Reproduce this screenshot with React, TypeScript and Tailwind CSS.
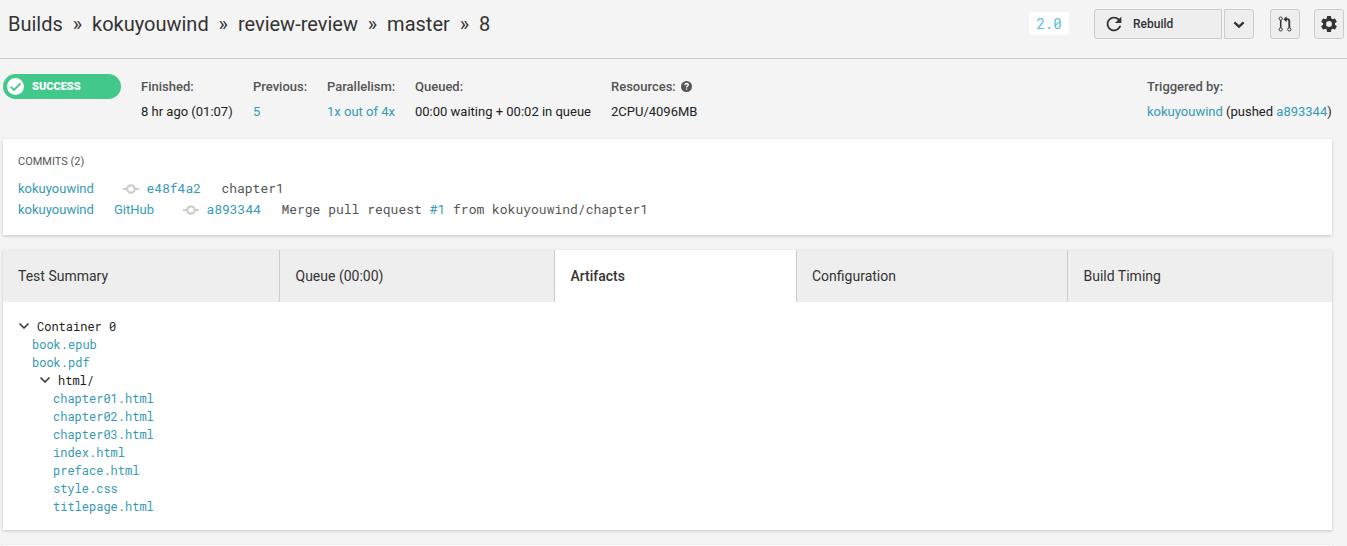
import React from "react";

const link = "text-[#359ab5]";
const mono = "font-['Roboto_Mono','DejaVu_Sans_Mono',monospace]";
const card = "bg-white shadow-[0_1px_3px_rgba(0,0,0,0.2)]";

function Crumbs() {
  const parts = ["Builds", "kokuyouwind", "review-review", "master", "8"];
  return (
    <nav className="flex items-center text-[20px] leading-[24px] text-[#333]">
      {parts.map((p, i) => (
        <React.Fragment key={p}>
          {i > 0 && <span className="w-[29.2px] text-center">»</span>}
          <span>{p}</span>
        </React.Fragment>
      ))}
    </nav>
  );
}

function Chevron() {
  return (
    <svg width="10" height="6" viewBox="0 0 10 6" fill="none" stroke="#333" strokeWidth="1.5" className="mb-px">
      <path d="M0.5 0.5 5 5 9.5 0.5" />
    </svg>
  );
}

function Field({ label, width, children }: { label: React.ReactNode; width: string; children: React.ReactNode }) {
  return (
    <div className={`${width} shrink-0 whitespace-nowrap`}>
      <div className="flex h-[25px] items-center font-medium text-[#555]">{label}</div>
      <div className="flex h-[25px] items-center whitespace-pre text-[#222]">{children}</div>
    </div>
  );
}

function CommitIcon() {
  return (
    <svg width="16" height="10" viewBox="0 0 16 10" fill="none" stroke="#ccc" strokeWidth="2.2" className="mt-px">
      <circle cx="8" cy="5" r="3.7" />
      <path d="M0 5h4.2M11.8 5H16" />
    </svg>
  );
}

const button = "flex h-[30px] items-center border border-[#ccc] bg-[#eee]";

export default function App() {
  return (
    <div className="h-[546px] w-[1347px] overflow-hidden bg-[#f4f4f4] font-[Roboto,sans-serif] text-[13px] text-[#333]">
      <header className="flex h-[59px] items-start justify-between border-b border-[#ccc] pl-2 pr-[3px]">
        <div className="pt-3">
          <Crumbs />
        </div>
        <div className="flex pt-[9px]">
          <span className={`${mono} mr-[25px] mt-[3px] flex h-[23px] w-10 items-center justify-center rounded-[3px] bg-white text-[14px] text-[#54bfdc]`}>
            2.0
          </span>
          <button className={`${button} mr-0.5 w-32 rounded-l-[3px] pl-2 text-[12px] font-medium`}>
            <svg width="22" height="22" viewBox="0 0 24 24" fill="#333">
              <path d="M17.65 6.35C16.2 4.9 14.21 4 12 4c-4.42 0-7.99 3.58-7.99 8s3.57 8 7.99 8c3.73 0 6.84-2.55 7.73-6h-2.08c-.82 2.33-3.04 4-5.65 4-3.31 0-6-2.69-6-6s2.69-6 6-6c1.66 0 3.14.69 4.22 1.78L13 11h7V4l-2.35 2.35z" />
            </svg>
            <span className="ml-2">Rebuild</span>
          </button>
          <button className={`${button} mr-4 w-[30px] justify-center rounded-r-[3px]`}>
            <svg width="12" height="8" viewBox="0 0 12 8" fill="none" stroke="#333" strokeWidth="2.4" className="mt-[2px]">
              <path d="M1.4 1.4 6 5.6 10.6 1.4" />
            </svg>
          </button>
          <button className={`${button} mr-[14px] w-[30px] justify-center rounded-[3px]`}>
            <svg width="14" height="16" viewBox="0 0 14 16" fill="none" stroke="#333">
              <circle cx="2.7" cy="2.6" r="1.6" />
              <circle cx="2.7" cy="13.4" r="1.6" />
              <circle cx="11.3" cy="13.4" r="1.6" />
              <path d="M2.7 4.2v7.6" strokeWidth="1.5" />
              <path d="M7 3.2h2.3q2 0 2 2v6.6" strokeWidth="1.8" />
              <path d="M8.6 0.2v6L5.4 3.2Z" fill="#333" stroke="none" />
            </svg>
          </button>
          <button className={`${button} w-[30px] justify-center rounded-[3px]`}>
            <svg width="20" height="20" viewBox="0 0 24 24" fill="#333">
              <path d="M19.14 12.94c.04-.3.06-.61.06-.94s-.02-.64-.07-.94l2.03-1.58a.49.49 0 0 0 .12-.61l-1.92-3.32a.49.49 0 0 0-.59-.22l-2.39.96c-.5-.38-1.03-.7-1.62-.94l-.36-2.54a.48.48 0 0 0-.48-.41h-3.84a.47.47 0 0 0-.47.41l-.36 2.54c-.59.24-1.13.57-1.62.94l-2.39-.96a.48.48 0 0 0-.59.22L2.74 8.87a.48.48 0 0 0 .12.61l2.03 1.58c-.05.3-.09.63-.09.94s.02.64.07.94l-2.03 1.58a.49.49 0 0 0-.12.61l1.92 3.32c.12.22.37.29.59.22l2.39-.96c.5.38 1.03.7 1.62.94l.36 2.54c.05.24.24.41.48.41h3.84c.24 0 .44-.17.47-.41l.36-2.54c.59-.24 1.13-.56 1.62-.94l2.39.96c.22.08.47 0 .59-.22l1.92-3.32a.48.48 0 0 0-.12-.61zM12 15.5a3.5 3.5 0 1 1 0-7 3.5 3.5 0 0 1 0 7z" />
            </svg>
          </button>
        </div>
      </header>

      <section className="flex h-20 pl-[3px] pt-[15px]">
        <div className="mr-5 flex h-[25px] w-[118px] shrink-0 items-center rounded-full bg-[#42c88a] pl-1 text-[11px] font-black text-white">
          <svg width="17" height="17" viewBox="0 0 17 17">
            <circle cx="8.5" cy="8.5" r="8.5" fill="white" />
            <path d="M3.7 8.8 7 12 13.4 5.5" fill="none" stroke="#42c88a" strokeWidth="1.8" />
          </svg>
          <span className="ml-2 pt-px">SUCCESS</span>
        </div>
        <Field width="w-[112px]" label="Finished:">8 hr ago (01:07)</Field>
        <Field width="w-[74px]" label="Previous:"><a className={link}>5</a></Field>
        <Field width="w-[88px]" label="Parallelism:"><a className={link}>1x out of 4x</a></Field>
        <Field width="w-[196px]" label="Queued:">00:00 waiting + 00:02 in queue</Field>
        <Field
          width="w-[536px]"
          label={
            <>
              Resources:
              <svg width="11" height="11" viewBox="0 0 11 11" className="ml-[5px]">
                <circle cx="5.5" cy="5.5" r="5.5" fill="#555" />
                <path d="M3.7 4.1Q4 2.5 5.6 2.5 7.3 2.6 7.3 4 7.2 4.8 6.2 5.3 5.6 5.6 5.6 6.6M5.6 7.4V8.8" fill="none" stroke="white" strokeWidth="1.4" />
              </svg>
            </>
          }
        >
          2CPU/4096MB
        </Field>
        <Field width="w-[185px]" label="Triggered by:">
          <a className={link}>kokuyouwind</a> (pushed <a className={link}>a893344</a>)
        </Field>
      </section>

      <section className={`${card} ml-[3px] h-[96px] w-[1329px] pl-[15px] pt-[15px]`}>
        <h2 className="mb-2 text-[11px] leading-[16px] text-[#555]">COMMITS (2)</h2>
        <div className="flex h-[21px] items-center">
          <a className={`${link} w-[105px]`}>kokuyouwind</a>
          <CommitIcon />
          <a className={`${link} ${mono} ml-[7.4px] w-[75px]`}>e48f4a2</a>
          <span className={`${mono} text-[#555]`}>chapter1</span>
        </div>
        <div className="flex h-[21px] items-center">
          <a className={`${link} w-[96px]`}>kokuyouwind</a>
          <a className={`${link} w-[69px]`}>GitHub</a>
          <CommitIcon />
          <a className={`${link} ${mono} ml-[7.4px] w-[75px]`}>a893344</a>
          <span className={`${mono} whitespace-pre text-[#555]`}>
            Merge pull request <a className={link}>#1</a> from kokuyouwind/chapter1
          </span>
        </div>
      </section>

      <section className={`${card} ml-[3px] mt-[15px] h-[280px] w-[1329px]`}>
        <div className="flex h-[52px] bg-[#eee] text-[14px]">
          <div className="flex w-[277px] items-center border-r border-[#ccc] pl-[15px]">Test Summary</div>
          <div className="flex w-[275px] items-center border-r border-[#ccc] pl-[15.5px]">Queue (00:00)</div>
          <div className="flex w-[242px] items-center border-r border-[#ccc] bg-white pl-[15.5px] font-medium">Artifacts</div>
          <div className="flex w-[271px] items-center border-r border-[#ccc] pl-[15px]">Configuration</div>
          <div className="flex flex-1 items-center pl-[15.5px]">Build Timing</div>
        </div>
        <div className={`${mono} pl-[15px] pt-[15px] text-[12px] leading-[18px] text-[#222]`}>
          <div className="flex items-center gap-2 pl-px">
            <Chevron />
            Container 0
          </div>
          <ul className={`${link} pl-[14px]`}>
            <li>book.epub</li>
            <li>book.pdf</li>
            <li className="flex items-center gap-2 pl-2 text-[#222]">
              <Chevron />
              html/
            </li>
            <li>
              <ul className="pl-[21px]">
                {["chapter01.html", "chapter02.html", "chapter03.html", "index.html", "preface.html", "style.css", "titlepage.html"].map((f) => (
                  <li key={f}>{f}</li>
                ))}
              </ul>
            </li>
          </ul>
        </div>
      </section>

      <section className={`${card} ml-[3px] mt-[15px] h-10 w-[1329px]`} />
    </div>
  );
}
